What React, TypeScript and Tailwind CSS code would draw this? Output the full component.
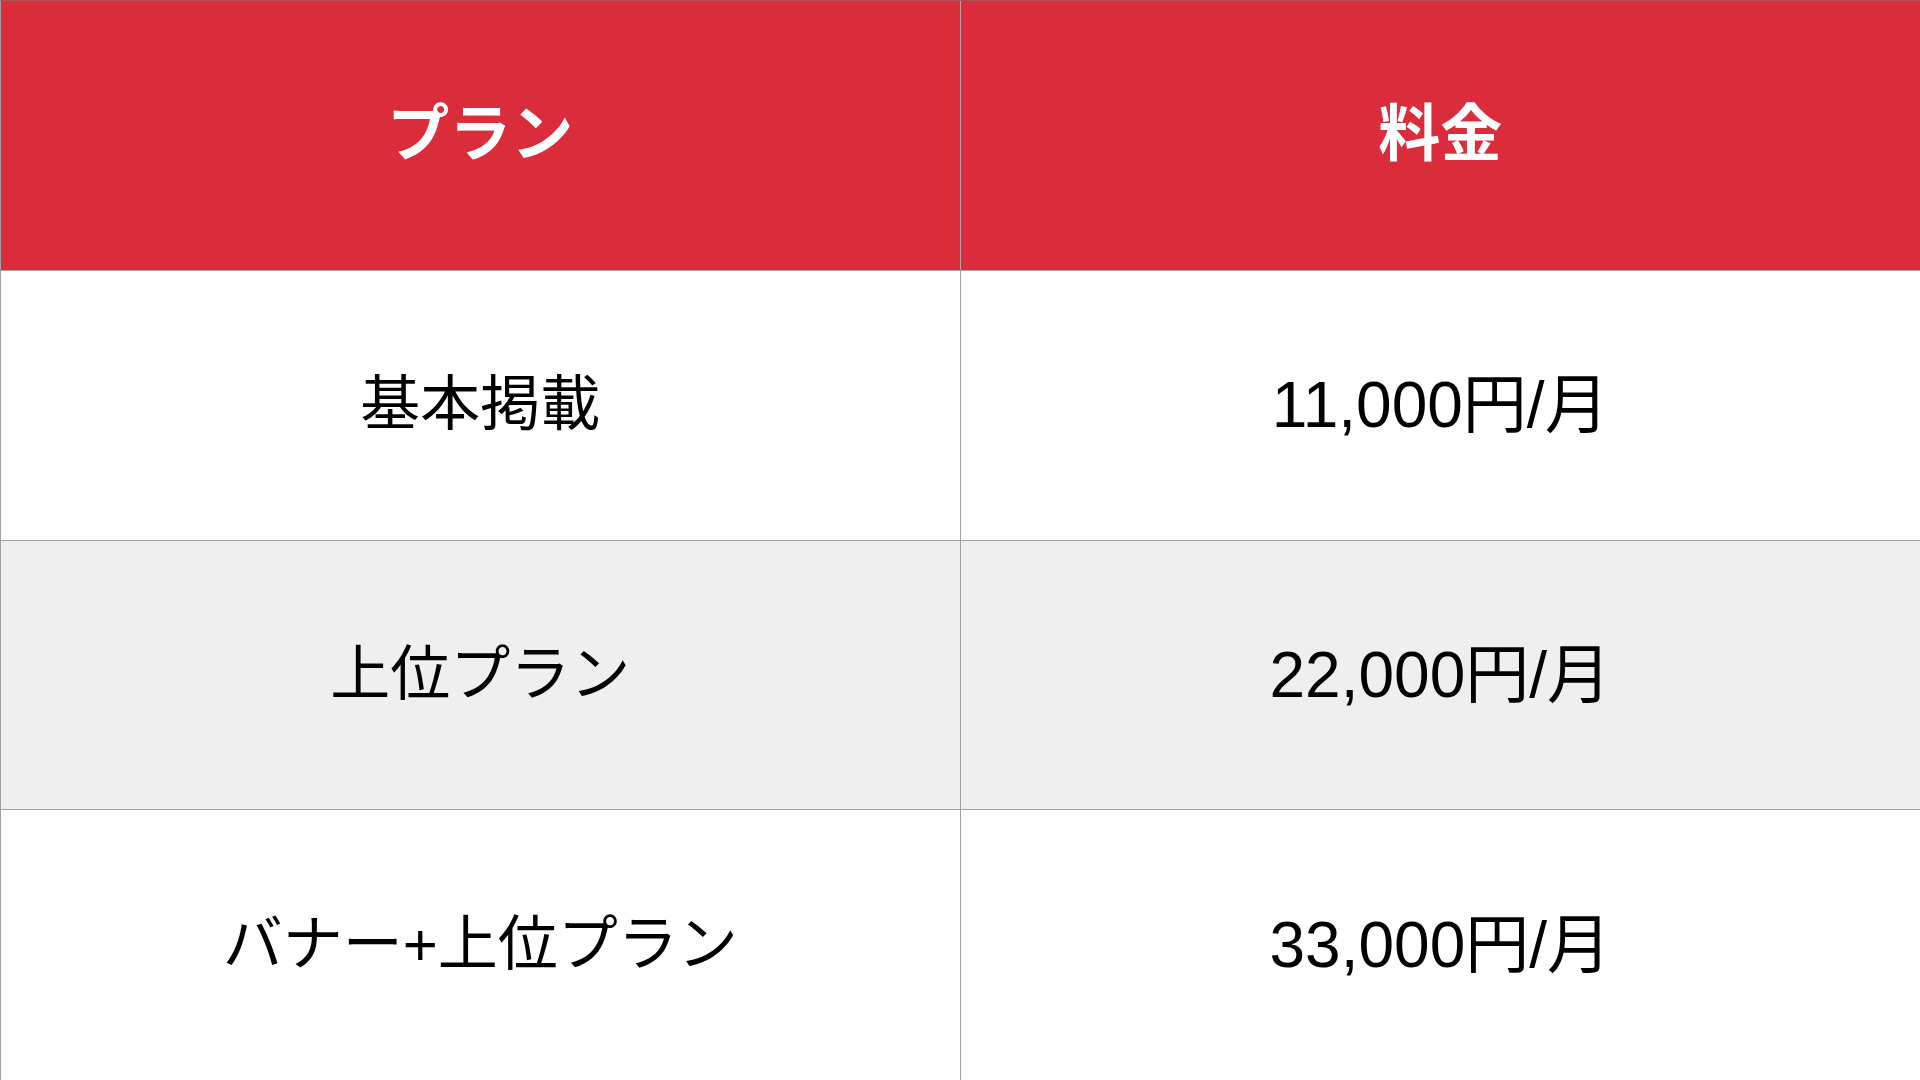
import React from "react";

const rows = [
  { plan: "基本掲載", price: "11,000円/月", bg: "bg-white", last: false },
  { plan: "上位プラン", price: "22,000円/月", bg: "bg-[#efefef]", last: false },
  { plan: "バナー+上位プラン", price: "33,000円/月", bg: "bg-white", last: true },
];

export default function App() {
  return (
    <div
      className="w-[1920px] h-[1080px] overflow-hidden bg-white"
      style={{ fontFamily: '"Liberation Sans", "Noto Sans CJK JP", sans-serif' }}
    >
      <div className="grid grid-cols-2 grid-rows-4 h-full border-t border-l border-t-[#b05058] border-l-[#a0a0a0]">
        <div className="flex items-center justify-center bg-[#da2c3a] border-r border-b border-[#b0a0a0] text-white font-bold text-[62px] leading-none">
          プラン
        </div>
        <div className="flex items-center justify-center bg-[#da2c3a] border-b border-[#b0a0a0] text-white font-bold text-[62px] leading-none">
          料金
        </div>
        {rows.map((r, i) => (
          <React.Fragment key={i}>
            <div
              className={`flex items-center justify-center ${r.bg} border-r ${r.last ? "" : "border-b"} border-[#a0a0a0] text-black text-[60px] leading-none`}
            >
              {r.plan}
            </div>
            <div
              className={`flex items-center justify-center ${r.bg} ${r.last ? "" : "border-b"} border-[#a0a0a0] text-black text-[64px] leading-none`}
            >
              {r.price}
            </div>
          </React.Fragment>
        ))}
      </div>
    </div>
  );
}
